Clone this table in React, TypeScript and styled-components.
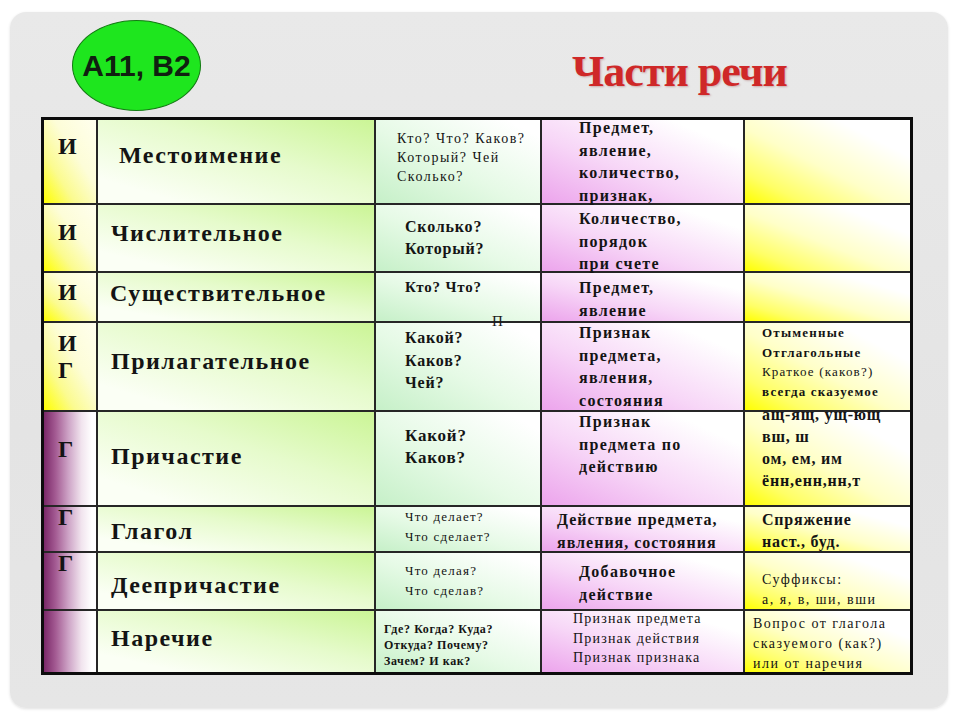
import React from "react";
import styled, { createGlobalStyle, css } from "styled-components";

const Global = createGlobalStyle`
  html, body { margin: 0; padding: 0; background: #ffffff; }
  body { width: 960px; height: 720px; overflow: hidden; font-family: "Liberation Serif", "Times New Roman", serif; }
`;

const Page = styled.div`
  width: 960px;
  height: 720px;
  padding: 12px 10px 0 10px;
  box-sizing: border-box;
`;

const Slide = styled.div`
  width: 938px;
  height: 696px;
  box-sizing: border-box;
  padding: 8px 0 0 31px;
  border-radius: 16px;
  background: linear-gradient(180deg, #e9e9e9 0%, #e4e4e4 60%, #e6e6e6 100%);
  box-shadow: 0 1px 3px rgba(0, 0, 0, 0.12);
  display: flex;
  flex-direction: column;
`;

const Header = styled.div`
  height: 97px;
  display: flex;
  align-items: flex-start;
`;

const Oval = styled.div`
  margin-left: 31px;
  width: 129px;
  height: 91px;
  box-sizing: border-box;
  border-radius: 50%;
  background: #1ee61e;
  border: 1.5px solid #127a12;
  display: flex;
  align-items: center;
  justify-content: center;
  font-family: "Liberation Sans", Arial, sans-serif;
  font-weight: bold;
  font-size: 30px;
  color: #102010;
`;

const Title = styled.h1`
  margin: 27px 0 0 371px;
  font-family: "Liberation Serif", "Times New Roman", serif;
  font-weight: bold;
  font-size: 44px;
  line-height: 50px;
  letter-spacing: -1px;
  color: #cf2828;
  text-shadow: 1px 1px 2px rgba(120, 0, 0, 0.25);
  white-space: nowrap;
`;

const Table = styled.div`
  width: 872px;
  box-sizing: border-box;
  border: 3px solid #0c0c0c;
  display: grid;
  grid-template-columns: 54px 278px 166px 203px 165px;
  background: #ffffff;
`;

type Kind = "key" | "keyDark" | "name" | "quest" | "desc" | "note";

const backgrounds: Record<Kind, ReturnType<typeof css>> = {
  key: css`
    background: linear-gradient(to top right, #ffff00 0%, #fbfb90 30%, #fdfdd8 60%, #ffffee 100%);
  `,
  keyDark: css`
    background: linear-gradient(to right, #7a2868 0%, #a35a92 22%, #cfa6c8 48%, #f1e4ee 72%, #ffffff 92%);
  `,
  name: css`
    background: linear-gradient(to bottom left, #cbf596 0%, #e6fbcc 42%, #fbfff5 85%);
  `,
  quest: css`
    background: linear-gradient(to top right, #c6f0c8 0%, #e6fae6 45%, #ffffff 90%);
  `,
  desc: css`
    background: linear-gradient(to top right, #eca4ec 0%, #f7d6f7 40%, #ffffff 82%);
  `,
  note: css`
    background: linear-gradient(to top right, #ffff00 0%, #ffff66 18%, #ffffc8 45%, #ffffff 78%);
  `,
};

const Cell = styled.div<{ $kind: Kind; $h: number; $last?: boolean; $lastCol?: boolean }>`
  position: relative;
  box-sizing: border-box;
  height: ${(p) => p.$h}px;
  border-right: ${(p) => (p.$lastCol ? "none" : "2px solid #262626")};
  border-bottom: ${(p) => (p.$last ? "none" : "2px solid #262626")};
  ${(p) => backgrounds[p.$kind]}
`;

const Lines = styled.div<{
  $top: number;
  $left: number;
  $size: number;
  $lh: number;
  $bold?: boolean;
  $ls: number;
}>`
  position: relative;
  z-index: 1;
  margin-top: ${(p) => p.$top}px;
  margin-left: ${(p) => p.$left}px;
  font-family: "Liberation Serif", "Times New Roman", serif;
  font-size: ${(p) => p.$size}px;
  line-height: ${(p) => p.$lh}px;
  font-weight: ${(p) => (p.$bold ? "bold" : "normal")};
  letter-spacing: ${(p) => p.$ls}px;
  color: #141414;
  white-space: nowrap;
`;

const Line = styled.div<{ $bold?: boolean }>`
  ${(p) =>
    p.$bold === undefined
      ? ""
      : css`
          font-weight: ${p.$bold ? "bold" : "normal"};
        `}
`;

const Stray = styled.span`
  position: absolute;
  z-index: 2;
  left: 116px;
  top: 40px;
  font-family: "Liberation Serif", "Times New Roman", serif;
  font-size: 15px;
  color: #1a1a1a;
`;

type Style = { size: number; lh: number; bold?: boolean; ls: number };

const S: Record<string, Style> = {
  key: { size: 24, lh: 27, bold: true, ls: 0 },
  name: { size: 24, lh: 28, bold: true, ls: 1.5 },
  qSmall: { size: 14, lh: 19, bold: false, ls: 1.5 },
  qBig: { size: 16, lh: 22, bold: true, ls: 0.8 },
  qBigger: { size: 17, lh: 22, bold: true, ls: 0.8 },
  qTiny: { size: 12, lh: 16, bold: true, ls: 0.6 },
  desc: { size: 16, lh: 22.5, bold: true, ls: 1.3 },
  descSmall: { size: 14, lh: 19.5, bold: false, ls: 1.2 },
  note: { size: 13, lh: 19.5, bold: true, ls: 1.2 },
  noteBig: { size: 16, lh: 22, bold: true, ls: 0.8 },
  noteSmall: { size: 14, lh: 20, bold: false, ls: 1.5 },
};

type Block = { lines: (string | { t: string; bold: boolean })[]; top: number; left: number; style: Style };

type Row = {
  h: number;
  dark: boolean;
  key: Block;
  name: Block;
  q: Block;
  d: Block;
  n?: Block;
  stray?: boolean;
};

const rows: Row[] = [
  {
    h: 85,
    dark: false,
    key: { lines: ["И"], top: 13, left: 14, style: S.key },
    name: { lines: ["Местоимение"], top: 21, left: 21, style: S.name },
    q: { lines: ["Кто? Что? Каков?", "Который? Чей", "Сколько?"], top: 9, left: 21, style: S.qSmall },
    d: { lines: ["Предмет,", "явление,", "количество,", "признак,"], top: -3, left: 37, style: S.desc },
  },
  {
    h: 68,
    dark: false,
    key: { lines: ["И"], top: 14, left: 14, style: S.key },
    name: { lines: ["Числительное"], top: 14, left: 13, style: S.name },
    q: { lines: ["Сколько?", "Который?"], top: 11, left: 29, style: S.qBig },
    d: { lines: ["Количество,", "порядок", "при счете"], top: 3, left: 37, style: S.desc },
  },
  {
    h: 50,
    dark: false,
    key: { lines: ["И"], top: 6, left: 14, style: S.key },
    name: { lines: ["Существительное"], top: 6, left: 12, style: S.name },
    q: { lines: ["Кто? Что?"], top: 4, left: 29, style: { size: 15, lh: 20, bold: true, ls: 0.8 } },
    d: { lines: ["Предмет,", "явление"], top: 4, left: 37, style: S.desc },
    stray: true,
  },
  {
    h: 89,
    dark: false,
    key: { lines: ["И", "Г"], top: 7, left: 14, style: S.key },
    name: { lines: ["Прилагательное"], top: 24, left: 13, style: S.name },
    q: { lines: ["Какой?", "Каков?", "Чей?"], top: 4, left: 29, style: { size: 16, lh: 22.5, bold: true, ls: 0.8 } },
    d: { lines: ["Признак", "предмета,", "явления,", "состояния"], top: -1, left: 37, style: S.desc },
    n: {
      lines: [
        "Отыменные",
        "Отглагольные",
        { t: "Краткое (каков?)", bold: false },
        "всегда сказуемое",
      ],
      top: 0,
      left: 17,
      style: S.note,
    },
  },
  {
    h: 95,
    dark: true,
    key: { lines: ["Г"], top: 24, left: 14, style: S.key },
    name: { lines: ["Причастие"], top: 30, left: 13, style: S.name },
    q: { lines: ["Какой?", "Каков?"], top: 13, left: 29, style: S.qBigger },
    d: { lines: ["Признак", "предмета по", "действию"], top: -1, left: 37, style: S.desc },
    n: { lines: ["ащ-ящ, ущ-ющ", "вш, ш", "ом, ем, им", "ённ,енн,нн,т"], top: -8, left: 17, style: S.noteBig },
  },
  {
    h: 46,
    dark: true,
    key: { lines: ["Г"], top: -1, left: 14, style: { size: 24, lh: 22, bold: true, ls: 0 } },
    name: { lines: ["Глагол"], top: 10, left: 13, style: S.name },
    q: { lines: ["Что делает?", "Что сделает?"], top: 0, left: 29, style: { size: 13, lh: 20, bold: false, ls: 1.2 } },
    d: { lines: ["Действие предмета,", "явления, состояния"], top: 2, left: 15, style: { size: 16, lh: 22.5, bold: true, ls: 1 } },
    n: { lines: ["Спряжение", "наст., буд."], top: 2, left: 17, style: S.noteBig },
  },
  {
    h: 58,
    dark: true,
    key: { lines: ["Г"], top: -1, left: 14, style: { size: 24, lh: 22, bold: true, ls: 0 } },
    name: { lines: ["Деепричастие"], top: 18, left: 13, style: S.name },
    q: { lines: ["Что делая?", "Что сделав?"], top: 8, left: 29, style: { size: 13, lh: 20, bold: false, ls: 1.2 } },
    d: { lines: ["Добавочное", " действие"], top: 8, left: 37, style: S.desc },
    n: { lines: ["Суффиксы:", "а, я, в, ши, вши"], top: 17, left: 17, style: S.noteSmall },
  },
  {
    h: 61,
    dark: true,
    key: { lines: [""], top: 0, left: 14, style: S.key },
    name: { lines: ["Наречие"], top: 13, left: 13, style: S.name },
    q: { lines: ["Где? Когда? Куда?", "Откуда? Почему?", "Зачем? И как?"], top: 10, left: 8, style: S.qTiny },
    d: { lines: ["Признак предмета", "Признак действия", "Признак признака"], top: -2, left: 31, style: S.descSmall },
    n: { lines: ["Вопрос от глагола", "сказуемого (как?)", "или от наречия"], top: 3, left: 8, style: S.noteSmall },
  },
];

function Text({ b }: { b: Block }) {
  return (
    <Lines $top={b.top} $left={b.left} $size={b.style.size} $lh={b.style.lh} $bold={b.style.bold} $ls={b.style.ls}>
      {b.lines.map((l, i) =>
        typeof l === "string" ? (
          <Line key={i}>{l === "" ? "\u00a0" : l}</Line>
        ) : (
          <Line key={i} $bold={l.bold}>
            {l.t}
          </Line>
        )
      )}
    </Lines>
  );
}

export default function App() {
  return (
    <>
      <Global />
      <Page>
        <Slide>
          <Header>
            <Oval>A11, B2</Oval>
            <Title>Части речи</Title>
          </Header>
          <Table>
            {rows.map((r, i) => {
              const last = i === rows.length - 1;
              return (
                <React.Fragment key={i}>
                  <Cell $kind={r.dark ? "keyDark" : "key"} $h={r.h} $last={last}>
                    <Text b={r.key} />
                  </Cell>
                  <Cell $kind="name" $h={r.h} $last={last}>
                    <Text b={r.name} />
                  </Cell>
                  <Cell $kind="quest" $h={r.h} $last={last}>
                    <Text b={r.q} />
                    {r.stray && <Stray>П</Stray>}
                  </Cell>
                  <Cell $kind="desc" $h={r.h} $last={last}>
                    <Text b={r.d} />
                  </Cell>
                  <Cell $kind="note" $h={r.h} $last={last} $lastCol>
                    {r.n && <Text b={r.n} />}
                  </Cell>
                </React.Fragment>
              );
            })}
          </Table>
        </Slide>
      </Page>
    </>
  );
}
